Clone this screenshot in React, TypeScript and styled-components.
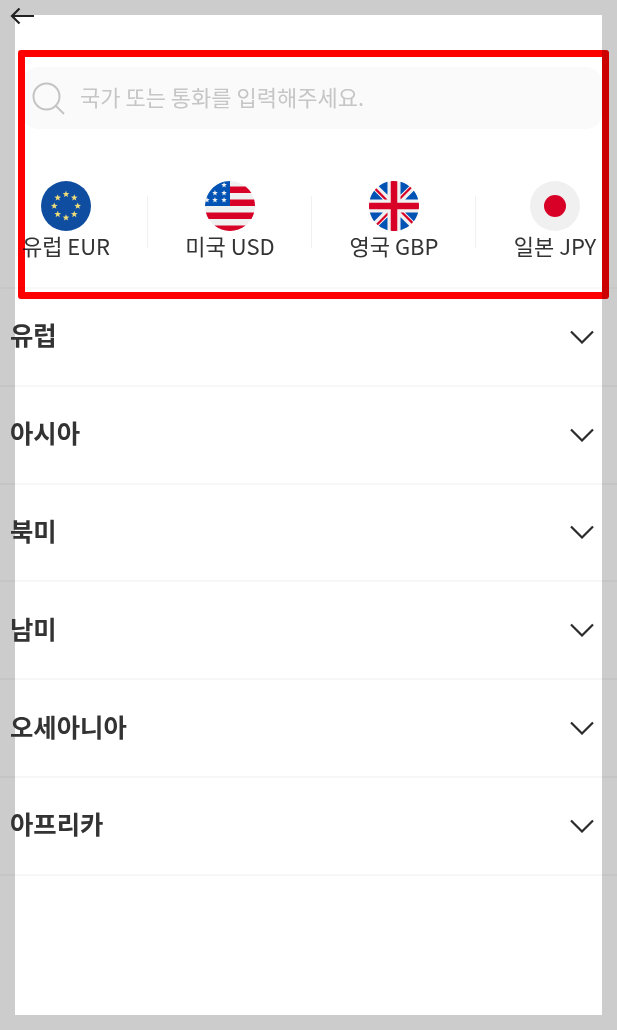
import React from "react";
import styled, { createGlobalStyle } from "styled-components";

const GlobalStyle = createGlobalStyle`
  html, body { margin: 0; padding: 0; background: #cccccc; }
  * { box-sizing: border-box; }
`;

const Page = styled.div`
  position: relative;
  width: 617px;
  height: 1030px;
  padding: 15px;
  overflow: hidden;
  font-family: "Noto Sans CJK KR", "Noto Sans", sans-serif;
  color: #333;
`;

const Sheet = styled.main`
  display: flow-root;
  height: 1000px;
  background: #fff;
`;

const TopBar = styled.header`
  display: flex;
  align-items: flex-start;
  height: 35px;
  margin-left: -15px;
  padding-left: 10px;
`;

const BackIcon = styled.svg`
  display: block;
  margin-top: -8px;
`;

const SearchBar = styled.div`
  display: flex;
  align-items: center;
  gap: 15px;
  height: 62px;
  margin: 17px 0 0 7px;
  padding-left: 10px;
  background: #fafafa;
  border-radius: 16px;
`;

const Placeholder = styled.span`
  font-size: 22px;
  line-height: 30px;
  margin-top: -4px;
  color: #c6c6c6;
  white-space: nowrap;
`;

const Quick = styled.nav`
  display: grid;
  grid-template-columns: 164px 164px 164px 158px;
  margin: 52px 0 0 -31px;
  height: 106px;
`;

const Item = styled.div<{ $divider?: boolean }>`
  position: relative;
  display: flex;
  flex-direction: column;
  align-items: center;
  &::after {
    content: "";
    display: ${(p) => (p.$divider ? "block" : "none")};
    position: absolute;
    right: 0;
    top: 15px;
    height: 52px;
    width: 1px;
    background: #f1f1f1;
  }
`;

const Flag = styled.svg`
  display: block;
  width: 50px;
  height: 50px;
`;

const ItemLabel = styled.span`
  font-size: 22px;
  line-height: 30px;
  margin-top: -1px;
  color: #333;
  white-space: nowrap;
`;

const Regions = styled.ul`
  list-style: none;
  margin: 0 -15px;
  padding: 0;
  border-top: 2px solid rgba(0, 0, 0, 0.025);
`;

const Region = styled.li`
  display: flex;
  align-items: center;
  justify-content: space-between;
  height: 97.8px;
  padding: 0 23px 0 10px;
  border-bottom: 2px solid rgba(0, 0, 0, 0.03);
`;

const RegionName = styled.span`
  font-size: 25.4px;
  line-height: 36px;
  margin-top: -5px;
  font-weight: 700;
  color: #333;
`;

const Annotation = styled.div`
  position: absolute;
  left: 18px;
  top: 50px;
  width: 591px;
  height: 249px;
  border: 7px solid #ff0000;
  border-radius: 3px;
  mix-blend-mode: multiply;
  pointer-events: none;
`;

const starPoints = (cx: number, cy: number, r: number) =>
  Array.from({ length: 10 }, (_, i) => {
    const a = -Math.PI / 2 + (i * Math.PI) / 5;
    const d = i % 2 ? r * 0.42 : r;
    return `${(cx + d * Math.cos(a)).toFixed(1)},${(cy + d * Math.sin(a)).toFixed(1)}`;
  }).join(" ");

const EuFlag = () => (
  <Flag viewBox="0 0 512 512">
    <circle cx="256" cy="256" r="256" fill="#0f4da0" />
    {Array.from({ length: 8 }, (_, i) => {
      const a = (i * Math.PI) / 4;
      return (
        <polygon
          key={i}
          points={starPoints(256 + 120 * Math.sin(a), 256 - 120 * Math.cos(a), 36)}
          fill="#f0dc78"
        />
      );
    })}
  </Flag>
);

const usStars = [
  [195, 41],
  [102, 123],
  [195, 123],
  [20, 195],
  [102, 195],
  [195, 195],
];

const UsFlag = () => (
  <Flag viewBox="0 0 512 512">
    <circle cx="256" cy="256" r="256" fill="#f0f0f0" />
    <path
      fill="#d80027"
      d="M244.87 256H512c0-23.107-3.08-45.489-8.819-66.783H244.87V256zM244.87 122.435h229.556a257.35 257.35 0 0 0-59.07-66.783H244.87v66.783zM256 512c60.249 0 115.626-20.824 159.356-55.652H96.644C140.374 491.176 195.751 512 256 512zM37.574 389.565h436.852a254.474 254.474 0 0 0 28.755-66.783H8.819a254.474 254.474 0 0 0 28.755 66.783z"
    />
    <path
      fill="#0052b4"
      d="M256 0C180 0 112 33 65 86 30 126 8 176 2 232c0 8-2 16-2 24h256V0z"
    />
    {usStars.map(([x, y]) => (
      <polygon key={`${x}-${y}`} points={starPoints(x, y, 30)} fill="#f0f0f0" />
    ))}
  </Flag>
);

const UkFlag = () => (
  <Flag viewBox="0 0 512 512">
    <circle cx="256" cy="256" r="256" fill="#f0f0f0" />
    <path
      fill="#0052b4"
      d="M52.92 100.142c-20.109 26.163-35.272 56.318-44.101 89.077h133.178L52.92 100.142zM503.181 189.219c-8.829-32.758-23.993-62.913-44.101-89.076l-89.075 89.076h133.176zM8.819 322.784c8.83 32.758 23.993 62.913 44.101 89.075l89.074-89.075H8.819zM411.858 52.921c-26.163-20.109-56.317-35.272-89.076-44.102v133.177l89.076-89.075zM100.142 459.079c26.163 20.109 56.318 35.272 89.076 44.102V370.005l-89.076 89.074zM189.217 8.819c-32.758 8.83-62.913 23.993-89.075 44.101l89.075 89.075V8.819zM322.783 503.181c32.758-8.83 62.913-23.993 89.075-44.101l-89.075-89.075v133.176zM370.005 322.784l89.075 89.076c20.108-26.162 35.272-56.318 44.101-89.076H370.005z"
    />
    <path
      fill="#d80027"
      d="M509.833 222.609H289.392V2.167A258.556 258.556 0 0 0 256 0c-11.319 0-22.461.744-33.391 2.167v220.441H2.167A258.556 258.556 0 0 0 0 256c0 11.319.744 22.461 2.167 33.391h220.441v220.442a258.35 258.35 0 0 0 66.783 0V289.392h220.442A258.533 258.533 0 0 0 512 256c0-11.317-.744-22.461-2.167-33.391z"
    />
    <path
      fill="#d80027"
      d="M322.783 322.784L437.019 437.02a256.636 256.636 0 0 0 15.048-16.435l-97.802-97.802h-31.482v.001zM189.217 322.784h-.002L74.98 437.019a256.636 256.636 0 0 0 16.435 15.048l97.802-97.804v-31.479zM189.217 189.219v-.002L74.981 74.98a256.636 256.636 0 0 0-15.048 16.435l97.803 97.803h31.481zM322.783 189.219L437.02 74.981a256.328 256.328 0 0 0-16.435-15.047l-97.802 97.803v31.482z"
    />
  </Flag>
);

const JpFlag = () => (
  <Flag viewBox="0 0 50 50">
    <circle cx="25" cy="25" r="25" fill="#f0f0f0" />
    <circle cx="25" cy="25" r="11" fill="#d80027" />
  </Flag>
);

const Chevron = () => (
  <svg width="24" height="14" viewBox="0 0 24 14" fill="none" stroke="#2b2b2b" strokeWidth="2.2">
    <path d="M1 1.5 12 12.5 23 1.5" />
  </svg>
);

const currencies = [
  { label: "유럽 EUR", flag: <EuFlag /> },
  { label: "미국 USD", flag: <UsFlag /> },
  { label: "영국 GBP", flag: <UkFlag /> },
  { label: "일본 JPY", flag: <JpFlag /> },
];

const regions = ["유럽", "아시아", "북미", "남미", "오세아니아", "아프리카"];

export default function App() {
  return (
    <Page>
      <GlobalStyle />
      <Sheet>
        <TopBar>
          <BackIcon width="25" height="18" viewBox="0 0 25 18" fill="none" stroke="#222" strokeWidth="2.2">
            <path d="M24 9H2M9.5 1.5 2 9l7.5 7.5" />
          </BackIcon>
        </TopBar>
        <SearchBar>
          <svg width="33" height="33" viewBox="0 0 33 33" fill="none" stroke="#c4c4c4" strokeWidth="2">
            <circle cx="14.5" cy="14.5" r="13" />
            <path d="M24 24l8 8" />
          </svg>
          <Placeholder>국가 또는 통화를 입력해주세요.</Placeholder>
        </SearchBar>
        <Quick>
          {currencies.map((c, i) => (
            <Item key={c.label} $divider={i < currencies.length - 1}>
              {c.flag}
              <ItemLabel>{c.label}</ItemLabel>
            </Item>
          ))}
        </Quick>
        <Regions>
          {regions.map((r) => (
            <Region key={r}>
              <RegionName>{r}</RegionName>
              <Chevron />
            </Region>
          ))}
        </Regions>
      </Sheet>
      <Annotation />
    </Page>
  );
}
